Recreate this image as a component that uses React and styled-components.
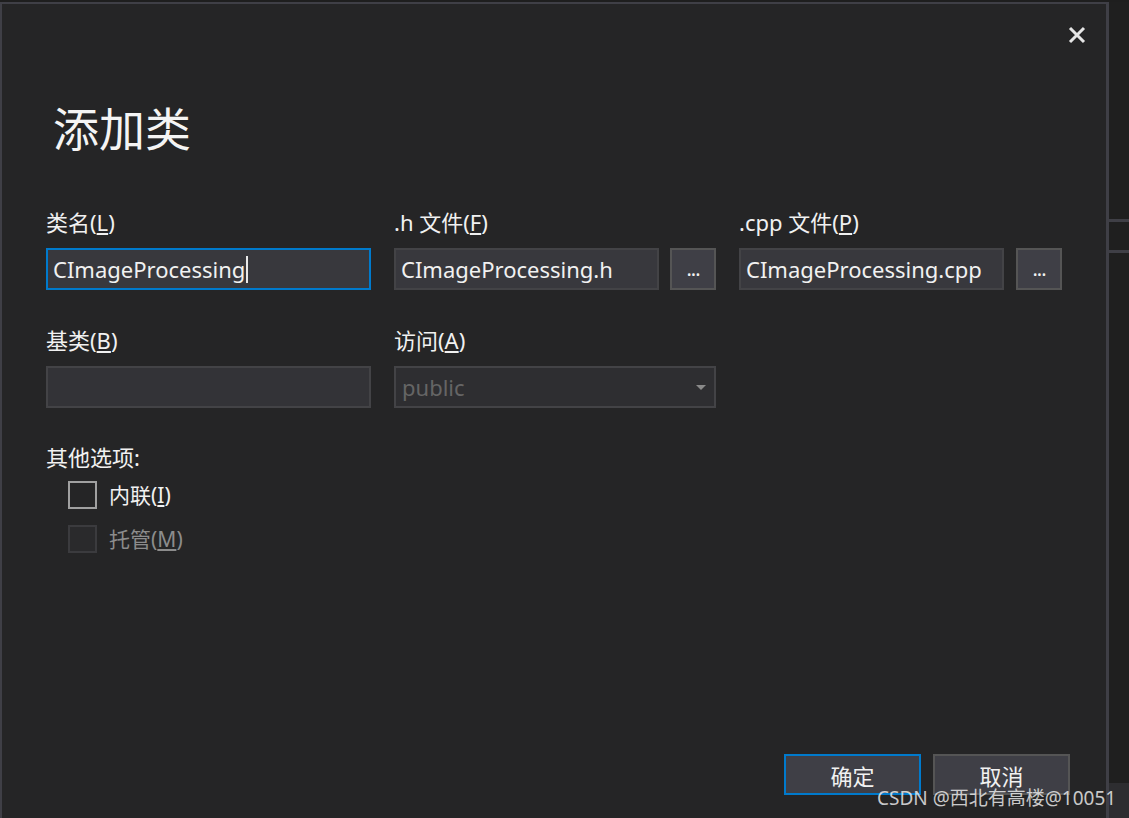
import React from "react";
import styled, { createGlobalStyle } from "styled-components";

const Global = createGlobalStyle`
  html, body { margin: 0; padding: 0; background: #1e1e1e; overflow: hidden; }
  body { font-family: "Noto Sans", "Noto Sans CJK SC", sans-serif; }
  * { box-sizing: border-box; }
`;

const FONT = `"Noto Sans", "Noto Sans CJK SC", sans-serif`;

const Page = styled.div`
  position: relative;
  height: 100vh;
  padding-top: 2px;
  display: flex;
  align-items: stretch;
`;

const Dialog = styled.div`
  flex: 0 0 1109px;
  display: flex;
  flex-direction: column;
  background: #252526;
  border-top: 2px solid #3f3f46;
  border-left: 2px solid #3f3f46;
  border-right: 3px solid #3f3f46;
  padding: 0 43px 23px 44px;
  color: #f1f1f1;
  font-family: ${FONT};
`;

const CloseRow = styled.div`
  display: flex;
  justify-content: flex-end;
  padding-top: 22px;
  margin-right: -23px;
  height: 40px;
`;

const CloseButton = styled.button`
  width: 18px;
  height: 18px;
  padding: 0;
  border: 0;
  background: transparent;
  display: flex;
  cursor: pointer;
`;

const Title = styled.h1`
  margin: 54px 0 0 7px;
  font-size: 46px;
  line-height: 60px;
  font-weight: 400;
  color: #f4f4f4;
`;

const FormGrid = styled.div`
  margin-top: 50px;
  display: grid;
  grid-template-columns: 325px 322px 323px;
  column-gap: 23px;
  row-gap: 36px;
`;

const Field = styled.div`
  display: flex;
  flex-direction: column;
  gap: 12px;
`;

const Label = styled.label`
  font-size: ${(p) => (p.$small ? 21 : 22)}px;
  line-height: 28px;
  color: ${(p) => (p.$disabled ? "#8c8c8c" : "#f1f1f1")};
  white-space: nowrap;
  u { text-decoration: underline; text-underline-offset: 2px; }
`;

const InputRow = styled.div`
  display: grid;
  grid-template-columns: 1fr 46px;
  column-gap: ${(p) => p.$gap}px;
`;

const TextBox = styled.div`
  height: 42px;
  display: flex;
  align-items: center;
  padding: 0 5px;
  font-size: 22px;
  color: #f1f1f1;
  background: ${(p) => (p.$disabled ? "#333337" : "#38383d")};
  border: ${(p) => (p.$focused ? "2px solid #007acc" : "2px solid #434346")};
  white-space: nowrap;
  overflow: hidden;
`;

const Caret = styled.span`
  display: inline-block;
  width: 2px;
  height: 27px;
  background: #e8e8e8;
  margin-left: 1px;
`;

const Select = styled.div`
  height: 42px;
  display: flex;
  align-items: center;
  justify-content: space-between;
  padding: 0 8px 0 6px;
  font-size: 22px;
  color: #656565;
  background: #2e2e31;
  border: 2px solid #434346;
`;

const Arrow = styled.span`
  width: 0;
  height: 0;
  border-left: 5px solid transparent;
  border-right: 5px solid transparent;
  border-top: 5px solid #8a8a8a;
`;

const Ellipsis = styled.button`
  height: 42px;
  padding: 0 0 6px;
  background: #3f3f46;
  border: 2px solid #555555;
  color: #f1f1f1;
  font-family: ${FONT};
  font-size: 20px;
  display: flex;
  align-items: flex-end;
  justify-content: center;
  letter-spacing: -1px;
`;

const Options = styled.div`
  margin-top: 35px;
  display: flex;
  flex-direction: column;
`;

const CheckList = styled.div`
  margin-top: 10px;
  padding-left: 22px;
  display: flex;
  flex-direction: column;
  gap: 16px;
`;

const CheckRow = styled.div`
  display: flex;
  align-items: center;
  gap: 12px;
  height: 28px;
`;

const Box = styled.span`
  width: 29px;
  height: 28px;
  border: 2px solid ${(p) => (p.$disabled ? "#3b3b3e" : "#a0a0a0")};
  background: ${(p) => (p.$disabled ? "#2a2a2c" : "#252526")};
`;

const Spacer = styled.div`
  flex: 1;
`;

const Footer = styled.div`
  display: flex;
  justify-content: flex-end;
  gap: 12px;
  margin-right: -7px;
`;

const DialogButton = styled.button`
  width: 137px;
  height: 41px;
  background: #3f3f46;
  border: 2px solid ${(p) => (p.$primary ? "#007acc" : "#555555")};
  color: #f1f1f1;
  font-family: ${FONT};
  font-size: 22px;
  padding: 0;
`;

const SideStrip = styled.div`
  flex: 1;
  display: flex;
  flex-direction: column;
  background: #1f1f1f;
`;

const SideGap = styled.div`
  height: ${(p) => p.$h}px;
  flex: ${(p) => (p.$grow ? 1 : "none")};
`;

const SideLine = styled.div`
  height: 3px;
  background: #3f3f46;
`;

const SideFoot = styled.div`
  height: 35px;
  background: #2d2d30;
`;

const Watermark = styled.div`
  position: absolute;
  left: 877px;
  top: 783px;
  font-family: ${FONT};
  font-size: 19px;
  line-height: 30px;
  color: rgba(240, 240, 240, 0.82);
  white-space: nowrap;
  pointer-events: none;
`;

export default function App() {
  return (
    <>
      <Global />
      <Page>
        <Dialog>
          <CloseRow>
            <CloseButton aria-label="关闭">
              <svg width="18" height="18" viewBox="0 0 18 18">
                <path d="M2 2 L16 16 M16 2 L2 16" stroke="#e6e6e6" strokeWidth="3" />
              </svg>
            </CloseButton>
          </CloseRow>
          <Title>添加类</Title>
          <FormGrid>
            <Field>
              <Label>类名(<u>L</u>)</Label>
              <TextBox $focused>
                CImageProcessing<Caret />
              </TextBox>
            </Field>
            <Field>
              <Label>.h 文件(<u>F</u>)</Label>
              <InputRow $gap={11}>
                <TextBox>CImageProcessing.h</TextBox>
                <Ellipsis>...</Ellipsis>
              </InputRow>
            </Field>
            <Field>
              <Label>.cpp 文件(<u>P</u>)</Label>
              <InputRow $gap={12}>
                <TextBox>CImageProcessing.cpp</TextBox>
                <Ellipsis>...</Ellipsis>
              </InputRow>
            </Field>
            <Field>
              <Label>基类(<u>B</u>)</Label>
              <TextBox $disabled />
            </Field>
            <Field>
              <Label>访问(<u>A</u>)</Label>
              <Select>
                public
                <Arrow />
              </Select>
            </Field>
          </FormGrid>
          <Options>
            <Label>其他选项:</Label>
            <CheckList>
              <CheckRow>
                <Box />
                <Label $small>内联(<u>I</u>)</Label>
              </CheckRow>
              <CheckRow>
                <Box $disabled />
                <Label $small $disabled>托管(<u>M</u>)</Label>
              </CheckRow>
            </CheckList>
          </Options>
          <Spacer />
          <Footer>
            <DialogButton $primary>确定</DialogButton>
            <DialogButton>取消</DialogButton>
          </Footer>
        </Dialog>
        <SideStrip>
          <SideGap $h={217} />
          <SideLine />
          <SideGap $h={28} />
          <SideLine />
          <SideGap $grow />
          <SideFoot />
        </SideStrip>
        <Watermark>CSDN @西北有高楼@10051</Watermark>
      </Page>
    </>
  );
}
